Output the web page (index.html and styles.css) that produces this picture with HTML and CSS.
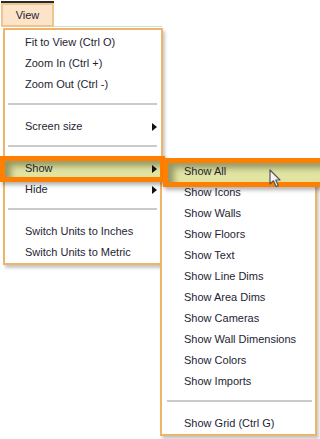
FILE: index.html
```html
<!DOCTYPE html>
<html>
<head>
<meta charset="utf-8">
<link rel="stylesheet" href="styles.css">
</head>
<body>
<div class="menubar">
  <div class="view-btn">View</div>
  <div class="bar-rest"></div>
</div>

<div class="menu main">
  <div class="item">Fit to View (Ctrl O)</div>
  <div class="item">Zoom In (Ctrl +)</div>
  <div class="item">Zoom Out (Ctrl -)</div>
  <div class="sep"></div>
  <div class="item sub-arrow">Screen size</div>
  <div class="sep"></div>
  <div class="item sub-arrow hl hl-show">Show</div>
  <div class="item sub-arrow">Hide</div>
  <div class="sep"></div>
  <div class="item">Switch Units to Inches</div>
  <div class="item">Switch Units to Metric</div>
</div>

<div class="menu submenu">
  <div class="item hl hl-all">Show All</div>
  <div class="item">Show Icons</div>
  <div class="item">Show Walls</div>
  <div class="item">Show Floors</div>
  <div class="item">Show Text</div>
  <div class="item">Show Line Dims</div>
  <div class="item">Show Area Dims</div>
  <div class="item">Show Cameras</div>
  <div class="item">Show Wall Dimensions</div>
  <div class="item">Show Colors</div>
  <div class="item">Show Imports</div>
  <div class="sep"></div>
  <div class="item">Show Grid (Ctrl G)</div>
</div>

<svg class="cursor" width="14" height="20" viewBox="0 0 14 20">
  <path d="M1 1 L1 15 L4.5 11.8 L7 17.5 L9.2 16.6 L6.8 11 L11 11 Z" fill="#f4f4f4" stroke="#555" stroke-width="1.2" stroke-linejoin="round"/>
</svg>
</body>
</html>
```

FILE: styles.css
```css
html, body {
  margin: 0;
  padding: 0;
  background: #ffffff;
  overflow: hidden;
  width: 320px;
  height: 439px;
}

body {
  font-family: "Liberation Sans", Arial, sans-serif;
  font-size: 11px;
  color: #1e1e34;
  position: relative;
}

.menubar {
  display: flex;
  align-items: flex-start;
  height: 28px;
}

.view-btn {
  margin-top: 3px;
  margin-left: 1px;
  box-sizing: border-box;
  width: 53px;
  height: 24px;
  border: 2px solid #efc58f;
  background: #fde4c9;
  text-align: center;
  line-height: 20px;
  box-shadow: 0 -2px 0 0 #2a2a2a;
}

.bar-rest {
  width: 108px;
  height: 26px;
  border-bottom: 1px solid #d8d8d0;
}

.menu {
  position: absolute;
  box-sizing: border-box;
  background: #ffffff;
  border: 2px solid #eeb56a;
  box-shadow: 2px 3px 3px rgba(0, 0, 0, 0.22);
}

.main {
  left: 3px;
  top: 28px;
  width: 160px;
  padding: 2px 0 0 0;
  height: 237px;
}

.submenu {
  left: 160px;
  top: 158px;
  width: 157px;
  padding: 1px 0 0 0;
  height: 278px;
}

.item {
  position: relative;
  height: 21px;
  line-height: 21px;
  padding-left: 20px;
  white-space: nowrap;
}

.submenu .item {
  padding-left: 22px;
}

.sep {
  height: 21px;
  position: relative;
}

.sep::before {
  content: "";
  position: absolute;
  left: 3px;
  right: 4px;
  top: 8px;
  height: 2px;
  background: #cacaca;
}

.submenu .sep::before {
  left: 5px;
  right: 3px;
}

.sub-arrow::after {
  content: "";
  position: absolute;
  right: 4px;
  top: 7px;
  width: 0;
  height: 0;
  border-top: 4px solid transparent;
  border-bottom: 4px solid transparent;
  border-left: 5px solid #111111;
}

.hl {
  background: transparent;
  z-index: 1;
}

.hl::before {
  content: "";
  position: absolute;
  box-sizing: border-box;
  border: 5px solid #ff8000;
  background: #e2e5a2;
  box-shadow: inset 6px 5px 6px rgba(100, 100, 60, 0.6), 2px 3px 4px rgba(0, 0, 0, 0.3);
  pointer-events: none;
  z-index: -1;
}

.hl-show::before {
  left: -5px;
  right: -4px;
  top: -2px;
  bottom: -3px;
}

.hl-all::before {
  left: 1px;
  right: -10px;
  top: -3px;
  bottom: -5px;
}

.cursor {
  position: absolute;
  left: 269px;
  top: 169px;
  z-index: 10;
}
```
